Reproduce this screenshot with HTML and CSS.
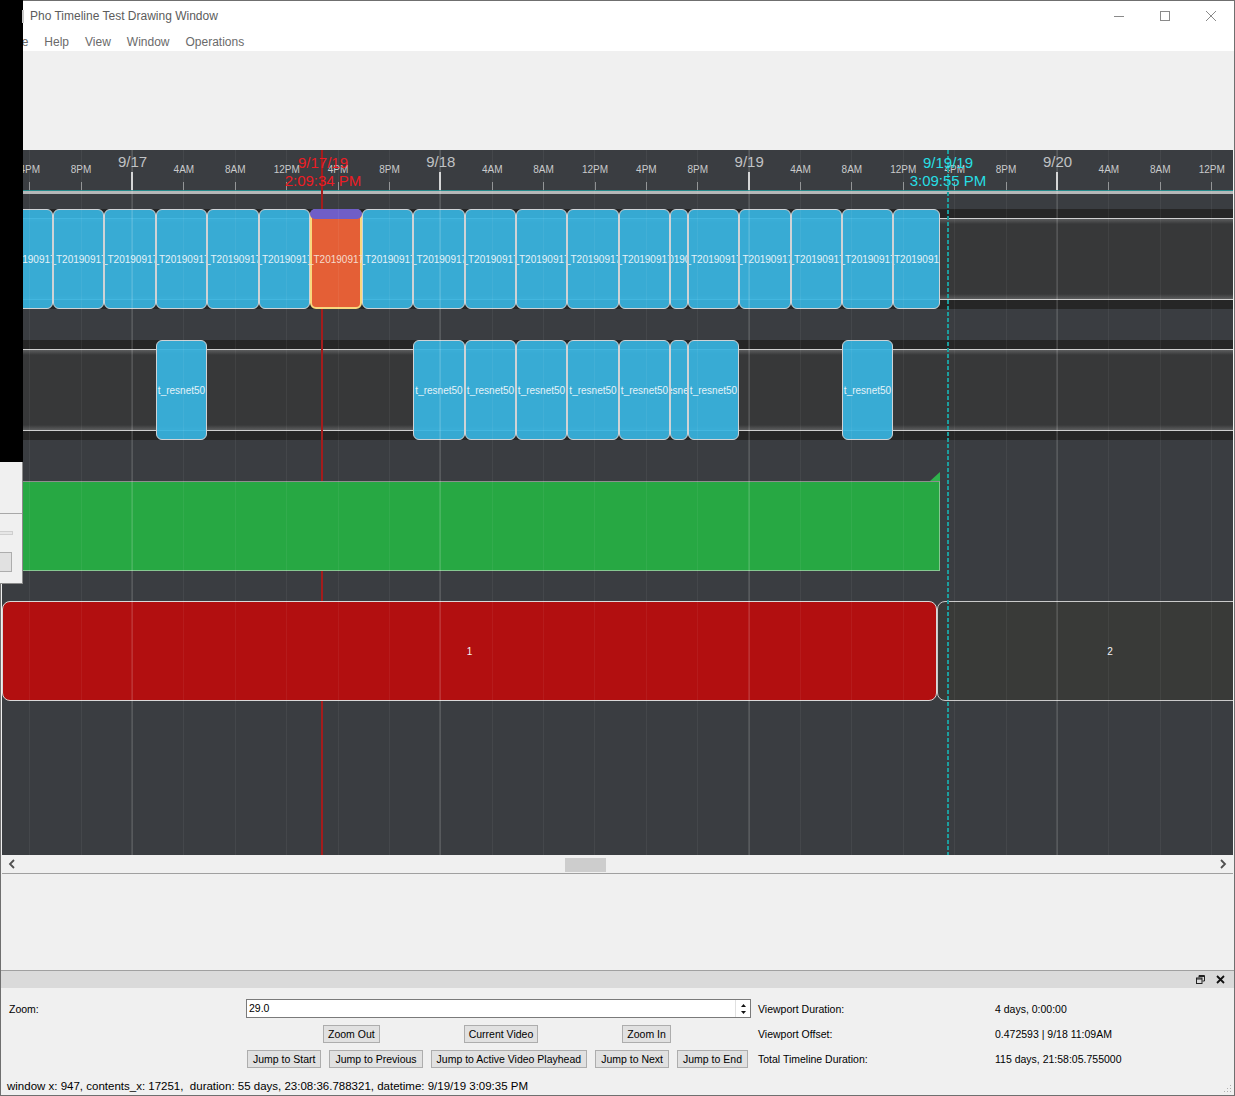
FILE: index.html
```html
<!DOCTYPE html>
<html lang="en">
<head>
<meta charset="utf-8">
<title>Pho Timeline Test Drawing Window</title>
<link rel="stylesheet" href="styles.css">
</head>
<body>
<div class="window">
  <div class="titlebar">
    <span class="title">Pho Timeline Test Drawing Window</span>
    <div class="win-controls">
      <div class="wc"><svg width="12" height="12" viewBox="0 0 12 12"><path d="M1 6.5h10" stroke="#8a8a8a" stroke-width="1"/></svg></div>
      <div class="wc"><svg width="12" height="12" viewBox="0 0 12 12"><rect x="1.5" y="1.5" width="9" height="9" fill="none" stroke="#8a8a8a" stroke-width="1"/></svg></div>
      <div class="wc"><svg width="12" height="12" viewBox="0 0 12 12"><path d="M1 1L11 11M11 1L1 11" stroke="#8a8a8a" stroke-width="1"/></svg></div>
    </div>
  </div>
  <div class="menubar">
    <span>File</span><span>Help</span><span>View</span><span>Window</span><span>Operations</span>
  </div>
  <div class="toolarea"></div>

  <div class="view">
    <div class="timeline">
      <div class="ruler">
        <div class="tick" style="left:27.2px"><span class="lbl">4PM</span></div>
        <div class="tick" style="left:78.6px"><span class="lbl">8PM</span></div>
        <div class="tick major" style="left:130px"><span class="lbl">9/17</span></div>
        <div class="tick" style="left:181.4px"><span class="lbl">4AM</span></div>
        <div class="tick" style="left:232.8px"><span class="lbl">8AM</span></div>
        <div class="tick" style="left:284.2px"><span class="lbl">12PM</span></div>
        <div class="tick" style="left:335.6px"><span class="lbl">4PM</span></div>
        <div class="tick" style="left:387px"><span class="lbl">8PM</span></div>
        <div class="tick major" style="left:438.3px"><span class="lbl">9/18</span></div>
        <div class="tick" style="left:489.7px"><span class="lbl">4AM</span></div>
        <div class="tick" style="left:541.1px"><span class="lbl">8AM</span></div>
        <div class="tick" style="left:592.5px"><span class="lbl">12PM</span></div>
        <div class="tick" style="left:643.9px"><span class="lbl">4PM</span></div>
        <div class="tick" style="left:695.3px"><span class="lbl">8PM</span></div>
        <div class="tick major" style="left:746.7px"><span class="lbl">9/19</span></div>
        <div class="tick" style="left:798.1px"><span class="lbl">4AM</span></div>
        <div class="tick" style="left:849.4px"><span class="lbl">8AM</span></div>
        <div class="tick" style="left:900.8px"><span class="lbl">12PM</span></div>
        <div class="tick" style="left:952.2px"><span class="lbl">4PM</span></div>
        <div class="tick" style="left:1003.6px"><span class="lbl">8PM</span></div>
        <div class="tick major" style="left:1055px"><span class="lbl">9/20</span></div>
        <div class="tick" style="left:1106.4px"><span class="lbl">4AM</span></div>
        <div class="tick" style="left:1157.8px"><span class="lbl">8AM</span></div>
        <div class="tick" style="left:1209.2px"><span class="lbl">12PM</span></div>
        <div class="ruler-line"></div>
      </div>

      <div class="tracks">
        <div class="track">
          <div class="clip" style="left:0px;width:51px"><span>_T20190917</span></div>
          <div class="clip" style="left:51px;width:51px"><span>_T20190917</span></div>
          <div class="clip" style="left:102px;width:52px"><span>_T20190917</span></div>
          <div class="clip" style="left:154px;width:51px"><span>_T20190917</span></div>
          <div class="clip" style="left:205px;width:52px"><span>_T20190917</span></div>
          <div class="clip" style="left:257px;width:51px"><span>_T20190917</span></div>
          <div class="clip selected" style="left:308px;width:52px"><span>_T20190917</span></div>
          <div class="clip" style="left:360px;width:51px"><span>_T20190917</span></div>
          <div class="clip" style="left:411px;width:52px"><span>_T20190917</span></div>
          <div class="clip" style="left:463px;width:51px"><span>_T20190917</span></div>
          <div class="clip" style="left:514px;width:51px"><span>_T20190917</span></div>
          <div class="clip" style="left:565px;width:52px"><span>_T20190917</span></div>
          <div class="clip" style="left:617px;width:51px"><span>_T20190917</span></div>
          <div class="clip" style="left:668px;width:18px"><span>_T20190917</span></div>
          <div class="clip" style="left:686px;width:51px"><span>_T20190917</span></div>
          <div class="clip" style="left:737px;width:52px"><span>_T20190917</span></div>
          <div class="clip" style="left:789px;width:51px"><span>_T20190917</span></div>
          <div class="clip" style="left:840px;width:51px"><span>_T20190917</span></div>
          <div class="clip" style="left:891px;width:47px"><span>_T20190917</span></div>
        </div>
        <div class="track">
          <div class="clip" style="left:154px;width:51px"><span>t_resnet50</span></div>
          <div class="clip" style="left:411px;width:52px"><span>t_resnet50</span></div>
          <div class="clip" style="left:463px;width:51px"><span>t_resnet50</span></div>
          <div class="clip" style="left:514px;width:51px"><span>t_resnet50</span></div>
          <div class="clip" style="left:565px;width:52px"><span>t_resnet50</span></div>
          <div class="clip" style="left:617px;width:51px"><span>t_resnet50</span></div>
          <div class="clip" style="left:668px;width:18px"><span>t_resnet50</span></div>
          <div class="clip" style="left:686px;width:51px"><span>t_resnet50</span></div>
          <div class="clip" style="left:840px;width:51px"><span>t_resnet50</span></div>
        </div>
        <div class="green"></div>
        <div class="red-row">
          <div class="rclip c1">1</div>
          <div class="rclip c2">2</div>
        </div>
      </div>

      <div class="grid"></div>
      <div class="playhead"></div>
      <div class="cursor"></div>
      <div class="ph-label red">9/17/19<br>2:09:34 PM</div>
      <div class="ph-label cyan">9/19/19<br>3:09:55 PM</div>
    </div>
    <div class="hscroll">
      <svg width="8" height="10" viewBox="0 0 8 10"><path d="M6 1L2 5L6 9" fill="none" stroke="#505050" stroke-width="1.8"/></svg>
      <div class="thumb"></div>
      <svg width="8" height="10" viewBox="0 0 8 10"><path d="M2 1L6 5L2 9" fill="none" stroke="#505050" stroke-width="1.8"/></svg>
    </div>
  </div>

  <div class="spacer"></div>

  <div class="dock">
    <div class="dock-title">
      <svg width="9" height="9" viewBox="0 0 9 9"><path d="M3 0.5h5.5v5.5h-2M3 0.5v2M3 1.5h5.5" fill="none" stroke="#222" stroke-width="1"/><rect x="0.5" y="3" width="5.5" height="5.5" fill="none" stroke="#222" stroke-width="1"/><path d="M0.5 4h5.5" stroke="#222" stroke-width="1"/></svg>
      <svg width="9" height="9" viewBox="0 0 9 9"><path d="M1 1L8 8M8 1L1 8" stroke="#111" stroke-width="1.8"/></svg>
    </div>
    <div class="dock-body">
      <div class="form">
        <div class="f-label first">Zoom:</div>
        <div class="spin">
          <span class="spin-val">29.0</span>
          <div class="spin-btns">
            <svg width="13" height="8" viewBox="0 0 13 8"><path d="M4 6h5L6.5 3z" fill="#111"/></svg>
            <svg width="13" height="8" viewBox="0 0 13 8"><path d="M4 2h5L6.5 5z" fill="#111"/></svg>
          </div>
        </div>
        <div class="f-label">Viewport Duration:</div>
        <div class="f-value">4 days, 0:00:00</div>

        <div></div>
        <div class="btns3">
          <span class="btn">Zoom Out</span>
          <span class="btn">Current Video</span>
          <span class="btn">Zoom In</span>
        </div>
        <div class="f-label">Viewport Offset:</div>
        <div class="f-value">0.472593 | 9/18 11:09AM</div>

        <div></div>
        <div class="btns5">
          <span class="btn">Jump to Start</span>
          <span class="btn">Jump to Previous</span>
          <span class="btn">Jump to Active Video Playhead</span>
          <span class="btn">Jump to Next</span>
          <span class="btn">Jump to End</span>
        </div>
        <div class="f-label">Total Timeline Duration:</div>
        <div class="f-value">115 days, 21:58:05.755000</div>
      </div>
      <div class="status">window x: 947, contents_x: 17251,&nbsp; duration: 55 days, 23:08:36.788321, datetime: 9/19/19 3:09:35 PM</div>
    </div>
  </div>

  <svg class="grip" width="8" height="8" viewBox="0 0 8 8"><g fill="#b0b0b0"><rect x="6" y="0" width="1" height="1"/><rect x="3" y="3" width="1" height="1"/><rect x="6" y="3" width="1" height="1"/><rect x="0" y="6" width="1" height="1"/><rect x="3" y="6" width="1" height="1"/><rect x="6" y="6" width="1" height="1"/></g></svg>

  <div class="ov-black"></div>
  <div class="ov-icon"></div>
  <div class="ov-panel">
    <div class="ov-group">
      <div class="ov-groove"></div>
      <div class="ov-btn"></div>
    </div>
  </div>
</div>
</body>
</html>
```
FILE: styles.css
```css
* { box-sizing: border-box; }
html, body { margin: 0; padding: 0; }
body {
  width: 1235px;
  height: 1096px;
  overflow: hidden;
  background: #f0f0f0;
  font-family: "Liberation Sans", Arial, sans-serif;
}

.window {
  position: relative;
  width: 1235px;
  height: 1096px;
  border: 1px solid #6f6f6f;
  display: flex;
  flex-direction: column;
  background: #f0f0f0;
}

/* title bar */
.titlebar {
  height: 30px;
  flex-shrink: 0;
  background: #fff;
  display: flex;
  align-items: center;
  padding-left: 29px;
  font-size: 12px;
  color: #5c5c5c;
}
.title { flex: 1; }
.win-controls { display: flex; height: 100%; }
.wc { width: 46px; display: flex; align-items: center; justify-content: center; }

.menubar {
  height: 20px;
  flex-shrink: 0;
  background: #fff;
  display: flex;
  align-items: center;
  padding-top: 2px;
  font-size: 12px;
  color: #6a6a6a;
}
.menubar span { padding: 0 8px; }

.toolarea { height: 99px; flex-shrink: 0; }

/* graphics view */
.view {
  height: 724px;
  flex-shrink: 0;
  margin: 0 1px;
  border-bottom: 1px solid #a0a0a0;
  display: flex;
  flex-direction: column;
}
.timeline {
  position: relative;
  height: 705px;
  flex-shrink: 0;
  background: #3a3d41;
  overflow: hidden;
  z-index: 0;
}

.ruler { position: relative; height: 44px; }
.ruler-line {
  position: absolute;
  left: 0; right: 0;
  top: 40px;
  height: 4px;
  border-top: 1px solid #24898a;
  background: #b5b7b8;
}
.tick { position: absolute; top: 0; width: 0; height: 44px; }
.tick .lbl {
  position: absolute;
  left: 0.5px;
  top: 14px;
  transform: translateX(-50%);
  font-size: 10px;
  line-height: 12px;
  color: #c9cacb;
  white-space: nowrap;
}
.tick::after {
  content: "";
  position: absolute;
  left: 0; top: 32px;
  width: 1px; height: 8px;
  background: #8e9092;
}
.tick.major .lbl { top: 3px; font-size: 15px; line-height: 17px; color: #c0c2c4; }
.tick.major::after { top: 22px; left: -1px; width: 2px; height: 19px; background: #cfd0d1; }

/* tracks */
.tracks { display: flex; flex-direction: column; padding-top: 15px; }
.track {
  position: relative;
  height: 100px;
  background: #262626;
}
.track + .track { margin-top: 31px; }
.track::before {
  content: "";
  position: absolute;
  left: 0; right: 0;
  top: 9px; bottom: 9px;
  border-top: 1px solid #cfcfcf;
  border-bottom: 1px solid #cfcfcf;
  background: linear-gradient(to bottom, #5c5d5e 0, #373839 5px, #373839 calc(100% - 5px), #5c5d5e 100%);
}

.clip {
  position: absolute;
  top: 0;
  height: 100px;
  z-index: 2;
  display: flex;
  align-items: center;
  justify-content: center;
  overflow: hidden;
  background: rgba(56, 180, 224, 0.93);
  border: 1px solid #cfd3d6;
  border-radius: 6px;
  font-size: 10px;
  color: #e4f2f8;
}
.clip span { white-space: nowrap; flex-shrink: 0; }
.clip.selected {
  background: #e45f36;
  border: 2px solid #f8d77d;
  overflow: visible;
  color: #f6dccd;
}
.clip.selected::before {
  content: "";
  position: absolute;
  left: -2px; right: -2px; top: -2px;
  height: 10px;
  border-radius: 6px;
  background: #6f5ec8;
}

.green {
  position: relative;
  z-index: 2;
  margin-top: 41px;
  width: 938px;
  height: 90px;
  background: #27a843;
  border: 1px solid #86c791;
  border-top-color: #8e8e8e;
}
.green::after {
  content: "";
  position: absolute;
  right: -1px; top: -10px;
  width: 10px; height: 9px;
  background: #2fb24c;
  clip-path: polygon(100% 0, 100% 100%, 0 100%);
}

.red-row { display: flex; margin-top: 30px; height: 100px; }
.rclip {
  position: relative;
  z-index: 2;
  flex-shrink: 0;
  display: flex;
  align-items: center;
  justify-content: center;
  font-size: 10px;
  color: #f2f2f2;
  border-radius: 8px;
}
.rclip.c1 { width: 935px; background: #b20f10; border: 1px solid #d9d9d9; }
.rclip.c2 { width: 346px; background: #393a38; border: 1px solid #cacaca; }

/* overlays inside the timeline */
.grid {
  position: absolute;
  inset: 0;
  z-index: 3;
  pointer-events: none;
  background:
    repeating-linear-gradient(90deg, rgba(255,255,255,0.10) -178.33px, rgba(255,255,255,0.10) -176.33px, transparent -176.33px, transparent 130px),
    repeating-linear-gradient(90deg, rgba(255,255,255,0.05) -24.19px, rgba(255,255,255,0.05) -23.19px, transparent -23.19px, transparent 27.2px);
  background-position: -1px 0, 0 0;
}
.playhead {
  position: absolute;
  left: 319px; top: 0; bottom: 0;
  width: 2px;
  background: #a41c1c;
  z-index: 1;
}
.cursor {
  position: absolute;
  left: 945px; top: 0; bottom: 0;
  width: 2px;
  background: repeating-linear-gradient(to bottom, #1c9e9e 0 4px, transparent 4px 6px);
  z-index: 4;
}
.ph-label {
  position: absolute;
  top: 4px;
  transform: translateX(-50%);
  font-size: 15px;
  line-height: 18px;
  text-align: center;
  white-space: nowrap;
  z-index: 5;
}
.ph-label.red { left: 321px; color: #ec1c24; }
.ph-label.cyan { left: 946px; color: #27dfe4; }

/* scrollbar */
.hscroll {
  position: relative;
  height: 18px;
  flex-shrink: 0;
  display: flex;
  align-items: center;
  justify-content: space-between;
  padding: 0 6px;
  background: #f0f0f0;
}
.thumb {
  position: absolute;
  left: 563px; top: 3px;
  width: 41px; height: 14px;
  background: #cdcdcd;
}

.spacer { flex: 1; }

/* dock */
.dock { flex-shrink: 0; border-top: 1px solid #a0a0a0; }
.dock-title {
  height: 17px;
  background: #dadada;
  display: flex;
  align-items: center;
  justify-content: flex-end;
  gap: 11px;
  padding-right: 9px;
}
.dock-body { height: 107px; padding-top: 11px; font-size: 10.5px; color: #000; }
.form {
  display: grid;
  grid-template-columns: 245px 505px 244px 1fr;
  grid-template-rows: 19px 19px 19px;
  row-gap: 6px;
  align-items: center;
}
.f-label { padding-left: 7px; }
.f-label.first { padding-left: 8px; }
.spin {
  height: 19px;
  display: flex;
  align-items: stretch;
  background: #fff;
  border: 1px solid #7a7a7a;
}
.spin-val { flex: 1; padding-left: 2px; line-height: 17px; }
.spin-btns {
  width: 15px;
  display: flex;
  flex-direction: column;
  justify-content: center;
  border-left: 1px solid #e0e0e0;
  padding: 1px 0 0 1px;
}
.spin-btns svg { display: block; }
.btns3 {
  display: flex;
  align-items: center;
  gap: 84px;
  padding-left: 77px;
}
.btns5 {
  display: flex;
  justify-content: space-between;
  align-items: center;
  padding: 0 3px 0 1px;
}
.btn {
  display: inline-block;
  height: 18px;
  padding: 0 5px;
  background: #e1e1e1;
  border: 1px solid #adadad;
  line-height: 16px;
  white-space: nowrap;
}
.btns3 .btn { padding: 0 4px; }
.status { padding: 11px 0 0 6px; font-size: 11.5px; line-height: 14px; white-space: nowrap; }

.grip { position: absolute; right: 2px; bottom: 2px; }

/* other desktop windows overlapping on the left */
.ov-black {
  position: absolute;
  left: -1px; top: -1px;
  width: 23px; height: 463px;
  background: #000;
  z-index: 10;
}
.ov-icon {
  position: absolute;
  left: 21px; top: 9px;
  width: 2px; height: 13px;
  background: #c8c8c8;
  z-index: 10;
}
.ov-panel {
  position: absolute;
  left: -1px; top: 461px;
  width: 23px; height: 122px;
  background: #f0f0f0;
  border-right: 1px solid #8a8a8a;
  border-bottom: 1px solid #8a8a8a;
  z-index: 10;
  padding-top: 51px;
}
.ov-group { border-top: 1px solid #a8a8a8; height: 69px; padding-top: 17px; }
.ov-groove { width: 13px; height: 4px; background: #e6e6e6; border: 1px solid #cfcfcf; border-left: 0; }
.ov-btn { margin-top: 17px; width: 12px; height: 20px; background: #e1e1e1; border: 1px solid #adadad; border-left: 0; }
```
